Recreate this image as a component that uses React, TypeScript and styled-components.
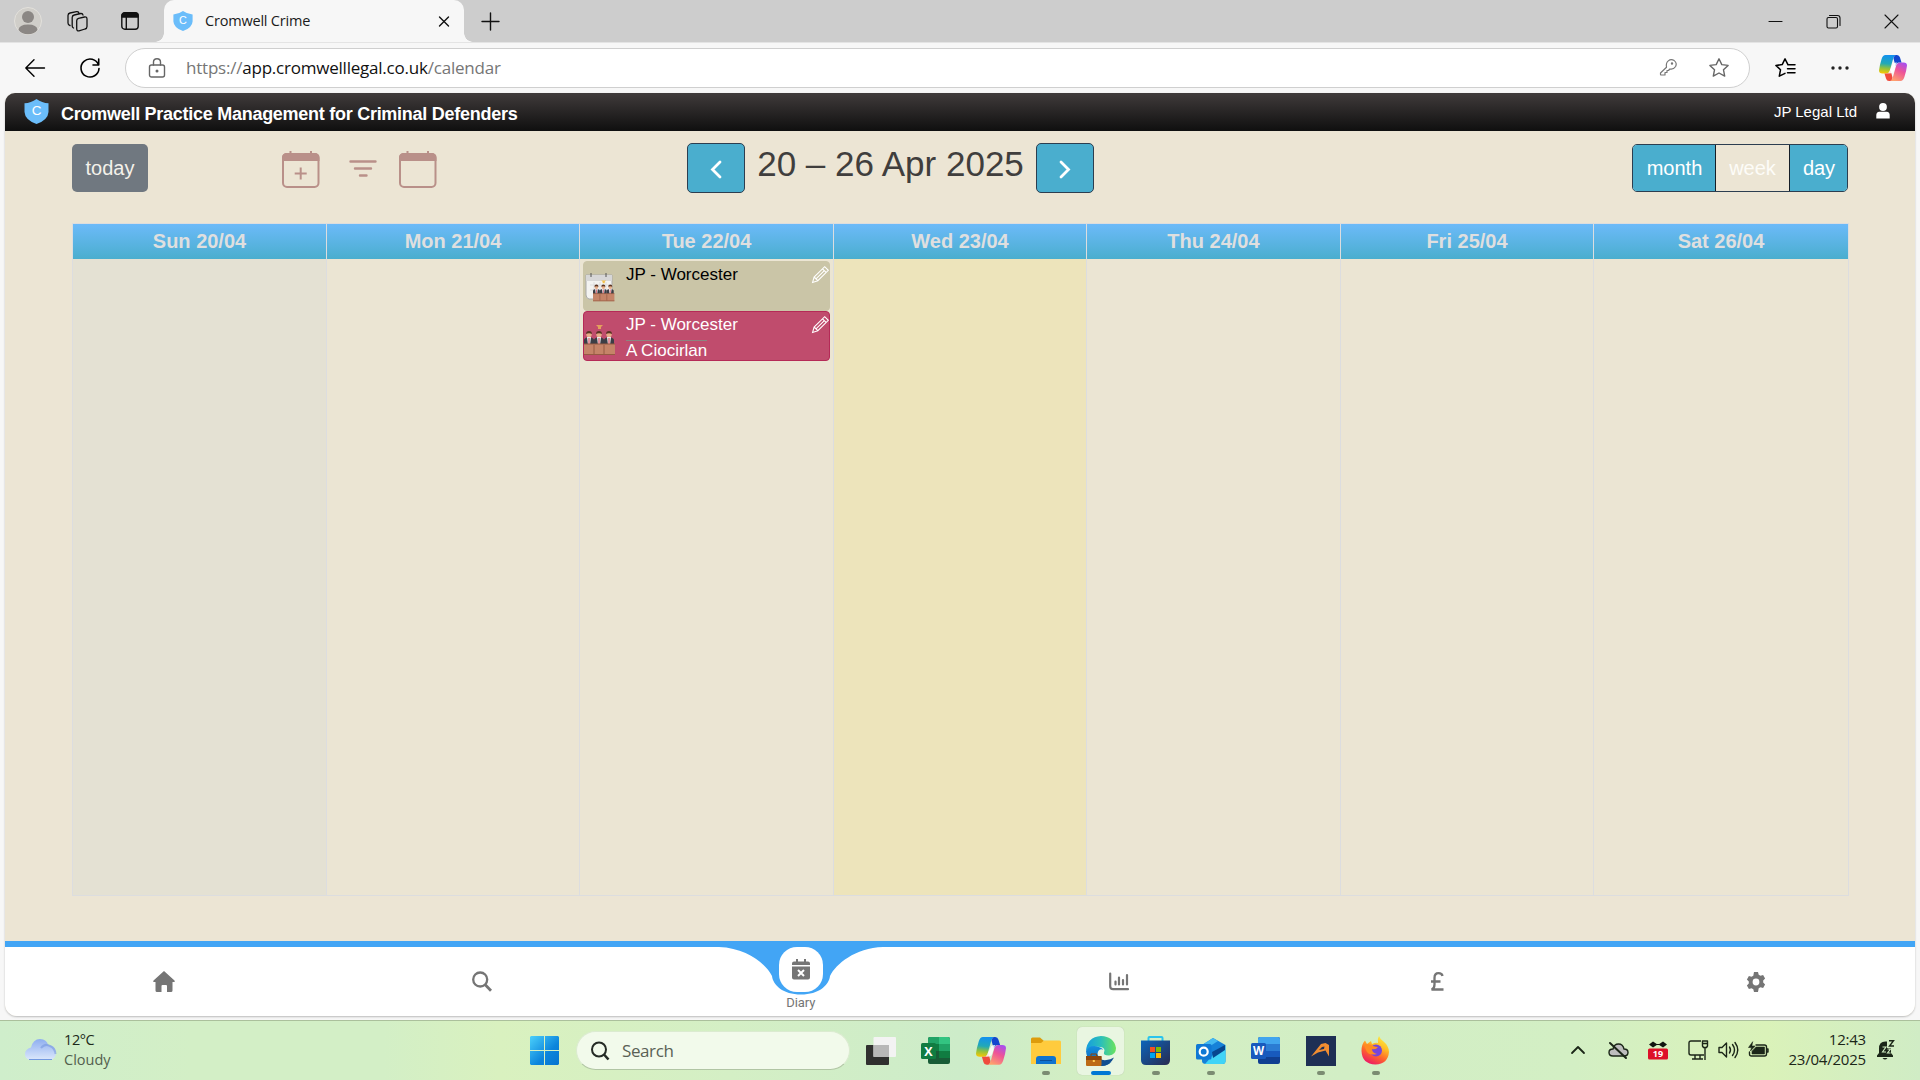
import React from 'react';
import styled, { createGlobalStyle } from 'styled-components';

const Global = createGlobalStyle`
  * { box-sizing: border-box; }
  html, body { margin: 0; padding: 0; }
  body { width: 1920px; height: 1080px; overflow: hidden; background: #f7f7f7; font-family: "Liberation Sans", Arial, sans-serif; }
  svg { display: block; flex: none; overflow: visible; }
`;
const SEGOE = '"Open Sans", "Noto Sans", sans-serif';

const Screen = styled.div`
  width: 1920px; height: 1080px; display: flex; flex-direction: column; background: #f7f7f7;
`;
const TabStrip = styled.div`
  height: 42px; background: #cdcdcd; display: flex; align-items: center; color: #111;
`;
const Slot = styled.div<{ $w: number; $gap?: number; $after?: number; $drop?: number }>`
  width: ${p => p.$w}px; margin: ${p => p.$drop ?? 0}px ${p => p.$after ?? 0}px 0 ${p => p.$gap ?? 0}px;
  flex: none; display: flex; justify-content: center; align-items: center;
`;
const Tab = styled.div`
  position: relative; width: 300px; height: 42px; margin-left: 8px; flex: none; background: #f7f7f7; border-radius: 10px 10px 0 0;
  display: flex; align-items: center; padding: 0 13px 0 9px;
  &::before, &::after { content: ''; position: absolute; bottom: 0; width: 9px; height: 9px; }
  &::before { left: -9px; background: radial-gradient(circle at 0 0, transparent 8.5px, #f7f7f7 9px); }
  &::after { right: -9px; background: radial-gradient(circle at 100% 0, transparent 8.5px, #f7f7f7 9px); }
`;
const TabTitle = styled.span`
  flex: 1; margin-left: 12px; font: 14.5px/20px ${SEGOE}; letter-spacing: -0.2px; color: #1b1b1b; white-space: nowrap;
`;
const Spacer = styled.div`flex: 1;`;
const Toolbar = styled.div`
  height: 51px; display: flex; align-items: center; padding-bottom: 1px; border-top: 1px solid #e4e4e4;
`;
const AddressBar = styled.div`
  width: 1625px; height: 40px; margin-left: 11px; border: 1px solid #cfcfcf; border-radius: 20px; background: #fff; display: flex; align-items: center; padding-left: 22px;
`;
const Url = styled.span`
  margin-left: 20px; font: 17px/24px ${SEGOE}; letter-spacing: -0.22px; color: #767676; flex: 1; white-space: nowrap;
  b { font-weight: 400; color: #111; }
`;
const Page = styled.div`
  width: 1910px; height: 923px; margin-left: 5px; border-radius: 10px 10px 12px 12px; overflow: hidden; display: flex; flex-direction: column;
  background: #ece5d4; box-shadow: 0 1px 2px #bbb; flex: none;
`;
const AppBar = styled.header`
  height: 38px; flex: none; background: linear-gradient(#403b3b, #0f0f0f); color: #fff; display: flex; align-items: center; padding: 0 25px 2px 19px;
`;
const AppTitle = styled.h1`
  margin: 5px 0 0 12px; font-size: 18px; line-height: 22px; font-weight: 700; letter-spacing: -0.27px; flex: 1; white-space: nowrap;
`;
const Account = styled.span`font-size: 15px; margin-right: 19px; white-space: nowrap;`;
const Main = styled.main`
  height: 810px; flex: none; padding: 12px 66px 0 67px; display: flex; flex-direction: column;
`;
const Controls = styled.div`
  height: 80px; width: 1776px; display: grid; grid-template-columns: 615px 407px 1fr; align-items: start;
`;
const LeftTools = styled.div`display: flex; align-items: flex-start;`;
const TodayButton = styled.button`
  width: 76px; height: 48px; margin: 1px 134px 0 0; border: 0; border-radius: 5px; background: #707880; color: #f4f1ea; font: 20px "Liberation Sans", Arial, sans-serif; padding: 0;
`;
const NavGroup = styled.div`display: flex; justify-content: space-between;`;
const ArrowButton = styled.button`
  width: 58px; height: 50px; padding: 0; border: 1px solid #2c3e50; border-radius: 5px; background: #4aaece; display: flex; align-items: center; justify-content: center;
`;
const Period = styled.h2`
  margin: 0; font-size: 35px; font-weight: 400; line-height: 42px; color: #403e3d; white-space: nowrap;
`;
const Views = styled.div`
  justify-self: end; display: flex; height: 48px; margin-top: 1px; width: 216px; border: 1px solid #2c3e50; border-radius: 5px; overflow: hidden;
`;
const ViewButton = styled.button<{ $w: number; $active?: boolean }>`
  width: ${p => p.$w}px; flex: none; border: 0; padding: 0 0 0 1px; color: #fff; font: 20px "Liberation Sans", Arial, sans-serif;
  background: ${p => (p.$active ? '#ece5d4' : '#4aaece')};
  ${p => p.$active && 'border: solid #151e27; border-width: 0 1px; color: #fdfcf8; padding: 0;'}
`;
const Calendar = styled.div`
  width: 1777px; height: 673px; border: 1px solid #dcdddf; display: grid; grid-template-columns: 253px 253px 254px 253px 254px 253px 1fr;
  background: #ebe5d3;
`;
const Day = styled.section<{ $tone?: string }>`
  display: flex; flex-direction: column; min-width: 0; background: ${p => p.$tone ?? 'transparent'};
  & + & { border-left: 1px solid #dcdddf; }
`;
const DayHead = styled.div`
  height: 35px; background: linear-gradient(#6cbaf9, #4aaece); color: #dfdfdf; font-size: 20px; line-height: 34px; font-weight: 700; text-align: center; margin-bottom: 2px;
`;
const EventCard = styled.article<{ $bg: string; $line: string; $color: string }>`
  margin: 0 3px; height: 50px; border: 1px solid ${p => p.$line}; border-radius: 4px; background: ${p => p.$bg}; color: ${p => p.$color};
  display: flex; align-items: flex-start; font-size: 17px;
`;
const EventText = styled.div`
  flex: 1; padding: 2px 0 0 11px; line-height: 22px; white-space: nowrap; display: flex; flex-direction: column; align-items: flex-start;
`;
const Client = styled.span`border-top: 1px solid #8b8580; margin-top: 4px; line-height: 19px;`;
const EditIcon = styled.svg`margin-top: 4px;`;
const BottomNav = styled.nav`
  position: relative; height: 75px; flex: none; background: #fff; border-top: 6px solid #42a5f5; display: grid; grid-template-columns: repeat(6, 1fr); color: #757575;
`;
const NavItem = styled.div<{ $top?: boolean }>`
  position: relative; display: flex; align-items: ${p => (p.$top ? 'flex-start' : 'center')}; justify-content: center;
`;
const Swoosh = styled.div`position: absolute; left: 0; right: 0; top: 0; display: flex; justify-content: center;`;
const ActiveItem = styled.div`
  position: relative; display: flex; flex-direction: column; align-items: center; width: 44px;
`;
const ActiveBox = styled.div`
  width: 44px; height: 45px; background: #fff; border-radius: 18px; display: flex; align-items: center; justify-content: center;
`;
const ActiveLabel = styled.span`font: 13px/16px Roboto, sans-serif; color: #757575; margin-top: 3px; letter-spacing: -0.1px;`;
const Taskbar = styled.footer`
  height: 60px; margin-top: 4px; flex: none; border-top: 1px solid #abc09c; display: flex; align-items: center;
  background: linear-gradient(90deg, #cfeecb 0%, #d3efc6 10%, #d3efc6 20%, #d9f1bf 26%, #d4efc5 38%, #cdecc9 50%, #d4efc2 58%, #d2eec5 70%, #d3efc4 82%, #daf2b9 92%, #d0ecc5 100%);
  font-family: ${SEGOE};
`;
const Weather = styled.div`
  width: 505px; display: flex; align-items: center; padding: 0 0 2px 25px; gap: 8px; font-size: 14.5px; line-height: 20px; letter-spacing: -0.4px; color: #1d2a1a;
  span { display: block; color: #53604e; letter-spacing: 0; }
`;
const SearchBox = styled.div`
  width: 274px; height: 39px; margin: 0 3px 0 17px; border-radius: 20px; background: #f2faeb; border: 1px solid #dbebd0; border-bottom-color: #b1c5a4;
  display: flex; align-items: center; gap: 12px; padding-left: 13px; font-size: 17px; letter-spacing: -0.4px; color: #5a6155;
`;
const AppSlot = styled.div<{ $active?: boolean; $mark?: 'idle' | 'on' }>`
  position: relative; width: 47px; height: 48px; margin: 0 4px; flex: none; border-radius: 5px; display: flex; align-items: center; justify-content: center;
  background: ${p => (p.$active ? '#e9f6e1' : 'transparent')};
  ${p => p.$active && 'box-shadow: 0 0 1px #aabba0;'}
  &::after {
    content: ''; position: absolute; bottom: 0; left: 50%; transform: translateX(-50%); height: 4px; border-radius: 2px;
    width: ${p => (p.$mark === 'on' ? 20 : p.$mark === 'idle' ? 8 : 0)}px; background: ${p => (p.$mark === 'on' ? '#0078d4' : '#7b8c72')};
  }
`;
const Tray = styled.div`flex: 1; display: flex; align-items: center; justify-content: flex-end; padding: 0 26px 1px 0; color: #1b2618;`;
const Clock = styled.div`
  width: 88px; text-align: right; font-size: 15px; line-height: 20px; letter-spacing: -0.2px; margin: 0 11px 2px 9px; white-space: nowrap; color: #1b2618;
`;

const Shield = ({ w, h }: { w: number; h: number }) => (
  <svg width={w} height={h} viewBox="0 0 25 25" preserveAspectRatio="none">
    <path d="M12.5 0Q18 4 24.5 4.3V13Q24 21 12.5 25Q1 21 .5 13V4.3Q7 4 12.5 0Z" fill="#6bbdfa" />
    <text x="12.5" y="16" textAnchor="middle" fontSize="13.5" fill="#fff" fontFamily="Liberation Sans">C</text>
  </svg>
);
const line = { fill: 'none', stroke: 'currentColor', strokeWidth: 1.4, strokeLinecap: 'round', strokeLinejoin: 'round' } as const;

const Copilot = ({ s = 28 }: { s?: number }) => (
  <svg width={s} height={s * 26 / 28} viewBox="0 0 28 26">
    <defs>
      <linearGradient id="cpA" x1="0.3" y1="0" x2="0.2" y2="1"><stop offset="0" stopColor="#1391ee" /><stop offset=".45" stopColor="#22a9b6" /><stop offset=".7" stopColor="#8fc13f" /><stop offset="1" stopColor="#fdc800" /></linearGradient>
      <linearGradient id="cpB" x1="0.8" y1="0" x2="0.3" y2="1"><stop offset="0" stopColor="#a64ff0" /><stop offset=".45" stopColor="#ee5497" /><stop offset="1" stopColor="#ffa16d" /></linearGradient>
    </defs>
    <path d="M6.500 0H17q-2 .5-2.800 3.500L11 15q-1 3.500-4 3.500H3.500Q0 18.500 0 15.500Q.4 11 2.600 4 3.800 0 6.500 0Z" fill="url(#cpA)" />
    <path d="M21.500 26H11q2-.5 2.800-3.500L17 11q1-3.500 4-3.500h3.500Q28 7.500 28 10.500q-.4 4.500-2.600 11.500Q24.200 26 21.500 26Z" fill="url(#cpB)" />
    <path d="M14.500 3.500Q15.300 0 17 0h1q2.300 0 3 2.500L22.500 7.500H20q-2.500 0-3.500 3.500Z" fill="#1246cf" />
    <path d="M13.500 22.500Q12.700 26 11 26h-1q-2.300 0-3-2.500L5.500 18.500H8q2.500 0 3.500-3.500Z" fill="#f04b3d" />
    <path d="M14.300 8.500Q15.300 7.500 18 7.500 17 9 16 13l-1.500 4Q13 18.500 9 18.500 10.500 17.500 11.500 14Z" fill="#fff" opacity=".85" />
  </svg>
);
const CalIcon = ({ plus }: { plus?: boolean }) => (
  <svg width="38" height="38" viewBox="0 0 38 38" fill="none" stroke="#b99089" strokeWidth="2">
    <rect x="1" y="3" width="35.500" height="33" rx="4" />
    <path d="M1 9V6.500Q1 3 5 3H32.500Q36.500 3 36.500 6.500V9Z" fill="#b99089" />
    <path d="M8.500 0v4M29 0v4" />
    {plus && <path d="M18.700 16.500v12M12.700 22.500h12" />}
  </svg>
);
const Jury = ({ board }: { board?: boolean }) => (
  <svg width="31" height="48" viewBox="0 0 31 48">
    {board && <g><path d="M2 13h26v24H5q-3-1-3-4Z" fill="#f3f3f1" stroke="#aaa" /><path d="M2 13h26v6H2Z" fill="#d7d7d7" /><path d="M6 23h19M6 28h19M10 20v14M16 20v14M22 20v14" stroke="#ddd" fill="none" /><path d="M7 11v4M22 11v4" stroke="#555" /></g>}
    <g transform={board ? 'translate(9 9.500) scale(.69)' : ''}>
      <path d="M12 13h7l-2 2v2h-3v-2Z" fill={board ? '#f3c14a' : '#e3a05c'} />
      {[5, 15, 25].map(x => (
        <g key={x}>
          <path d={`M${x - 5} 33V28q0-2 5-3 5 1 5 3v5Z`} fill="#3c3d45" />
          <path d={`M${x - 2} 25h4l-1 8h-2Z`} fill="#f4f4f4" /><path d={`M${x} 26v7`} stroke="#cf3346" />
          <circle cx={x} cy="22.500" r="2.700" fill="#e7ae88" /><path d={`M${x - 3} 22q0-3 3-3t3 3q-3-1.500-6 0`} fill="#5a3523" />
        </g>
      ))}
      <path d="M0 32h31v11H0Z" fill="#c58468" /><path d="M0 32h31M0 42.500h31M10 33v9M20 33v9" stroke="#965a43" fill="none" />
    </g>
  </svg>
);
const Pencil = () => (
  <EditIcon width="17" height="17" viewBox="0 0 17 17" fill="none" stroke="#fff" strokeWidth="1.100">
    <path d="M.6 16.400L2.100 11 12.700.700 16.300 4.300 5.800 14.700Z M2.100 11l3.700 3.700M10.500 2.800l3.600 3.600M4 12.800l8.300-8.200" />
  </EditIcon>
);
const Chevron = ({ right }: { right?: boolean }) => (
  <svg width="12" height="19" viewBox="0 0 12 19" fill="none" stroke="#fff" strokeWidth="2.800" strokeLinecap="round">
    <path d={right ? 'M2 3L9.500 10.500 2 18' : 'M10 3L2.500 10.500 10 18'} />
  </svg>
);
const Excel = () => (
  <svg width="30" height="29" viewBox="0 0 30 29">
    <rect x="7" y="1" width="22" height="27" rx="2" fill="#185c37" /><path d="M7 3q0-2 2-2h9v9H7Z" fill="#21a366" /><path d="M18 1h9q2 0 2 2v6H18Z" fill="#33c481" /><path d="M7 8h11v7H7ZM18 15h11v7H18Z" fill="#107c41" /><path d="M18 8h11v7H18Z" fill="#21a366" />
    <rect y="7" width="15" height="16" rx="1.500" fill="#107c41" /><text x="7.500" y="19.500" fontSize="12.500" fontWeight="700" textAnchor="middle" fill="#fff" fontFamily="Open Sans">X</text>
  </svg>
);
const Word = () => (
  <svg width="30" height="29" viewBox="0 0 30 29">
    <rect x="7" y="1" width="22" height="27" rx="2" fill="#103f91" /><path d="M7 3q0-2 2-2h18q2 0 2 2v5H7Z" fill="#41a5ee" /><path d="M7 8h22v7H7Z" fill="#2b7cd3" /><path d="M7 15h22v6H7Z" fill="#185abd" />
    <rect y="7" width="15" height="16" rx="1.500" fill="#185abd" /><text x="7.500" y="19" fontSize="11.500" fontWeight="700" textAnchor="middle" fill="#fff" fontFamily="Open Sans">W</text>
  </svg>
);
const Folder = () => (
  <svg width="30" height="28" viewBox="0 0 30 28">
    <path d="M0 2q0-1.500 1.500-1.500H9L13 4v5H0Z" fill="#dd9c0c" /><path d="M0 6h10l3-2.500h15.500q1.500 0 1.500 1.500v22H0Z" fill="#ffcb3d" /><path d="M5 27v-5q0-3 3-3h14q3 0 3 3v5Z" fill="#0f74cf" /><path d="M9 23.500h12" stroke="#0b4f9b" />
  </svg>
);
const Edge = () => (
  <svg width="30" height="30" viewBox="0 0 30 30">
    <defs>
      <linearGradient id="edA"><stop offset="0" stopColor="#169dde" /><stop offset=".5" stopColor="#2bbfba" /><stop offset="1" stopColor="#6be35c" /></linearGradient>
      <linearGradient id="edB" x2="0" y2="1"><stop stopColor="#1590df" /><stop offset="1" stopColor="#0b5cab" /></linearGradient>
    </defs>
    <path d="M0 15Q1 1 15 0q13 .5 15 12 0 7-7 7.500-6 0-5-3 2-5-4-5.500Q5 9 0 15Z" fill="url(#edA)" />
    <path d="M0 15Q4 8 13 11q3 1 4.500 2.500Q12 12 11.500 18q.5 7 9 8.500 3 .3 5-.5-5 4.500-12 3.800Q1 27 0 15Z" fill="url(#edB)" />
    <path d="M11.500 18q1.500 7 9 6 4-.5 7.500-2.500-4 8.500-13 8.500-4-5-3.500-12Z" fill="#124e91" />
    <rect y="20" width="15.500" height="10" rx="1" fill="#bd6b16" /><path d="M0 20h15.500v4H0Z" fill="#8c450b" /><path d="M5 20v-2h5.500v2" fill="none" stroke="#8c450b" /><rect x="6.800" y="24" width="2" height="2" fill="#ffcb52" />
  </svg>
);
const Store = () => (
  <svg width="29" height="29" viewBox="0 0 29 29">
    <defs><linearGradient id="st" x2="1" y2="1"><stop stopColor="#0c65bb" /><stop offset="1" stopColor="#292b50" /></linearGradient></defs>
    <path d="M7.500 6V2q0-1 1-1h12q1 0 1 1v4" fill="none" stroke="#29c4ed" strokeWidth="2" /><path d="M0 4.500h29V24q0 5-5 5H5q-5 0-5-5Z" fill="url(#st)" />
    <path d="M9 11h5v5H9Z" fill="#f25022" /><path d="M15 11h5v5h-5Z" fill="#7fba00" /><path d="M9 17h5v5H9Z" fill="#00a4ef" /><path d="M15 17h5v5h-5Z" fill="#ffb900" />
  </svg>
);
const Outlook = () => (
  <svg width="30" height="28" viewBox="0 0 30 28">
    <path d="M6 8L17 1l12.500 7v16q0 3-3 3H10q-4 0-4-3Z" fill="#1681d8" /><path d="M6 8L17 1l5 3L8 13Z" fill="#43b8f1" /><path d="M17 18L29.500 9v15q0 3-3 3H9Z" fill="#40d4f7" /><path d="M16 15L29 8v5l-12 8Z" fill="#07468f" />
    <rect y="7" width="15.500" height="15.500" rx="1.500" fill="#0f78d4" /><circle cx="7.700" cy="14.700" r="4" fill="none" stroke="#fff" strokeWidth="2.200" />
  </svg>
);
const Firefox = () => (
  <svg width="29" height="29" viewBox="0 0 29 29">
    <defs><linearGradient id="ff" x1=".8" y1="0" x2=".3" y2="1"><stop stopColor="#fff044" /><stop offset=".35" stopColor="#ffbc25" /><stop offset=".65" stopColor="#ff652b" /><stop offset="1" stopColor="#ec1769" /></linearGradient></defs>
    <path d="M18 0q1 3 4 5 6 5 6 11-1 12-13.500 12.500Q1 28 .5 15 .5 8 4 4.500L6 8l4-3 1 3q4-2 6-1Q16 3 18 0Z" fill="url(#ff)" />
    <circle cx="15" cy="14.500" r="6" fill="#7645da" /><path d="M3 9q5-2 9 1 3 1 5 1-2 3-6 2 0 4 5 5-9 2-11-4Z" fill="#ff8b22" />
  </svg>
);

const days = ['Sun 20/04', 'Mon 21/04', 'Tue 22/04', 'Wed 23/04', 'Thu 24/04', 'Fri 25/04', 'Sat 26/04'];
const tones: Record<number, string> = { 0: '#e4e1d3', 3: '#ede4bb' };

export default function App() {
  return (
    <Screen>
      <Global />
      <TabStrip>
        <Slot $w={56}>
          <svg width="28" height="28" viewBox="0 0 28 28"><circle cx="14" cy="14" r="13.500" fill="#d0cec9" stroke="#e3e1dc" /><circle cx="14" cy="10" r="6" fill="#8b8784" /><path d="M4.500 23Q5 17.500 14 17.500t9.500 5.500Q20 27.300 14 27.300T4.500 23Z" fill="#8b8784" /></svg>
        </Slot>
        <Slot $w={43}>
          <svg width="21" height="21" viewBox="0 0 21 21" {...line} strokeWidth={1.3}><path d="M11.500 7.300l6-1.300q2.500-.3 2.500 2v7.500q0 2-2 2.500l-6 1.800q-2.300.4-2.300-2V9.800q0-2 1.800-2.500Z" /><path d="M6.500 17q-1.300-.5-1.300-2V6.500q0-2 2-2.500l6.500-1.500q2-.2 2.300 1.500M3 14.500Q1 14 1 12V4.500q0-2 2-2.500L9.500.6q1.700-.2 2.300 1" /></svg>
        </Slot>
        <Slot $w={32} $gap={15}>
          <svg width="18" height="18" viewBox="0 0 18 18" {...line}><rect x=".8" y=".8" width="16.400" height="16.400" rx="3" /><path d="M1 5V3.500Q1 1 4 1h10q3 0 3 2.500V5Z" fill="currentColor" /><path d="M5.300 5v12" /></svg>
        </Slot>
        <Slot $w={10} />
        <Tab>
          <Shield w={20} h={20} />
          <TabTitle>Cromwell Crime</TabTitle>
          <svg width="14" height="14" viewBox="0 0 14 14" {...line}><path d="M2.500 3l9 9M11.500 3l-9 9" /></svg>
        </Tab>
        <Slot $w={53}>
          <svg width="17" height="17" viewBox="0 0 17 17" {...line}><path d="M8.500 0v17M0 8.500h17" /></svg>
        </Slot>
        <Spacer />
        <Slot $w={58}><svg width="13" height="13" viewBox="0 0 13 13" {...line} strokeWidth={1.1}><path d="M0 6.500h13" /></svg></Slot>
        <Slot $w={58}><svg width="13" height="13" viewBox="0 0 13 13" {...line} strokeWidth={1.1}><rect x="0" y="2.500" width="10.500" height="10.500" rx="1.500" /><path d="M2.500.5h8q2.500 0 2.500 2.500v7.500" /></svg></Slot>
        <Slot $w={58}><svg width="13" height="13" viewBox="0 0 13 13" {...line} strokeWidth={1.1}><path d="M0 0l13 13M13 0L0 13" /></svg></Slot>
      </TabStrip>
      <Toolbar>
        <Slot $w={20} $gap={25}><svg width="20" height="18" viewBox="0 0 20 18" {...line}><path d="M19.500 9H.8M9 .8L.8 9 9 17.200" /></svg></Slot>
        <Slot $w={20} $gap={35} $after={14}><svg width="20" height="20" viewBox="0 0 20 20" {...line} strokeWidth={1.6}><path d="M18.500 7A9 9 0 1 0 19 10.500M18.700 1v6H13" /></svg></Slot>
        <AddressBar>
          <svg width="18" height="20" viewBox="0 0 18 20" {...line} stroke="#666"><rect x="1.500" y="7" width="15" height="12" rx="2" /><path d="M5.500 7V4Q5.500.8 9 .8T12.500 4v3" /><circle cx="9" cy="13" r=".8" fill="#666" /></svg>
          <Url>https://<b>app.cromwelllegal.co.uk</b>/calendar</Url>
          <svg width="17" height="17" viewBox="0 0 17 17" {...line} stroke="#777" strokeWidth={1.2}><path d="M6.500 8.200Q5.700 4 8.300 1.900 11-.3 14.200 1.600 17.300 4 15.600 7.500 13.500 10.800 9.800 10L8.500 11.500H7v2H5V16H1.200q-.7 0-.7-.7V14Z" /><circle cx="12" cy="4.500" r=".6" /></svg>
          <Slot $w={20} $gap={32} $after={20}><svg width="20" height="19" viewBox="0 0 20 19" {...line} stroke="#666"><path d="M10 .8l2.800 5.800 6.300.8-4.600 4.400 1.200 6.300L10 15l-5.700 3.100 1.200-6.300L.9 7.400l6.300-.8Z" /></svg></Slot>
        </AddressBar>
        <Slot $w={20} $gap={25}><svg width="21" height="20" viewBox="0 0 21 20" {...line} strokeWidth={1.5}><path d="M12.800 6.300L10 .8 7.200 6.600.9 7.400l4.600 4.400-1.200 6.400L10 15.300M12.500 10.800H20M12.500 14.800H20M12.800 6.800H20" /></svg></Slot>
        <Slot $w={18} $gap={36}><svg width="18" height="4" viewBox="0 0 18 4" fill="#222"><circle cx="2" cy="2" r="1.700" /><circle cx="9" cy="2" r="1.700" /><circle cx="16" cy="2" r="1.700" /></svg></Slot>
        <Slot $w={28} $gap={30}><Copilot /></Slot>
      </Toolbar>
      <Page>
        <AppBar>
          <Shield w={25} h={25} />
          <AppTitle>Cromwell Practice Management for Criminal Defenders</AppTitle>
          <Account>JP Legal Ltd</Account>
          <svg width="14" height="16" viewBox="0 0 14 16" fill="#fff"><circle cx="7" cy="4" r="3.900" /><path d="M.3 15.500V12q0-2.800 3-3.200h7.400q3 .4 3 3.200v3.500Z" /></svg>
        </AppBar>
        <Main>
          <Controls>
            <LeftTools>
              <TodayButton>today</TodayButton>
              <Slot $w={38} $drop={8}><CalIcon plus /></Slot>
              <Slot $w={28} $gap={29} $drop={17}><svg width="28" height="17" viewBox="0 0 28 17" stroke="#b99089" strokeWidth="2.400" strokeLinecap="round"><path d="M1.500 1.500h25M6 8.500h16M11 15.500h6.500" /></svg></Slot>
              <Slot $w={38} $gap={22} $drop={8}><CalIcon /></Slot>
            </LeftTools>
            <NavGroup>
              <ArrowButton><Chevron /></ArrowButton>
              <Period>20 – 26 Apr 2025</Period>
              <ArrowButton><Chevron right /></ArrowButton>
            </NavGroup>
            <Views>
              <ViewButton $w={82}>month</ViewButton>
              <ViewButton $w={75} $active>week</ViewButton>
              <ViewButton $w={57}>day</ViewButton>
            </Views>
          </Controls>
          <Calendar>
            {days.map((d, i) => (
              <Day key={d} $tone={tones[i]}>
                <DayHead>{d}</DayHead>
                {i === 2 && (
                  <>
                    <EventCard $bg="#cac5a7" $line="#cac5a7" $color="#000">
                      <Jury board />
                      <EventText>JP - Worcester</EventText>
                      <Pencil />
                    </EventCard>
                    <EventCard $bg="#c04c6d" $line="#b52a57" $color="#fff">
                      <Jury />
                      <EventText>JP - Worcester<Client>A Ciocirlan</Client></EventText>
                      <Pencil />
                    </EventCard>
                  </>
                )}
              </Day>
            ))}
          </Calendar>
        </Main>
        <BottomNav>
          <NavItem><svg width="22" height="21" viewBox="0 0 22 21" fill="currentColor"><path d="M11 0l10.500 9.500q1 1.500-.5 1.500h-1.500v8.500q0 1.500-1.500 1.500h-4v-6q0-1-1-1H9.500q-1 0-1 1v6H4q-1.500 0-1.500-1.500V11H1Q-.5 11 .5 9.500Z" /></svg></NavItem>
          <NavItem><svg width="20" height="21" viewBox="0 0 20 21" fill="none" stroke="currentColor"><circle cx="8.200" cy="8.500" r="7" strokeWidth="2.300" /><path d="M13 13.500l6 6.300" strokeWidth="2.800" /></svg></NavItem>
          <NavItem $top>
            <Swoosh><svg width="164" height="48" viewBox="0 0 164 48"><path d="M0 0C28 1 47 17 53 29 54 38 64 47.500 82 47.500S110 38 111 29C117 17 136 1 164 0Z" fill="#42a5f5" /></svg></Swoosh>
            <ActiveItem>
              <ActiveBox><svg width="18" height="21" viewBox="0 0 18 21" fill="currentColor"><path d="M4 0h2v2.500h6V0h2v2.500h2q2 0 2 2V6H0V4.500q0-2 2-2h2ZM0 7.500h18v11q0 2-2 2H2q-2 0-2-2Z" /><path d="M6 11l6 6M12 11l-6 6" stroke="#fff" strokeWidth="2" /></svg></ActiveBox>
              <ActiveLabel>Diary</ActiveLabel>
            </ActiveItem>
          </NavItem>
          <NavItem><svg width="20" height="19" viewBox="0 0 20 19" fill="none" stroke="currentColor" strokeLinecap="round"><path d="M1.200 1.500v12.700q0 3 3 3H19M6.500 12.500V9.500M10 12.500V5.500M14 12.500V8M18 12.500V3" strokeWidth="2.200" /></svg></NavItem>
          <NavItem><svg width="14" height="19" viewBox="0 0 14 19" fill="none" stroke="currentColor" strokeWidth="2.300"><path d="M12.500 4Q12 1.200 8.500 1.200 4.500 1.200 4.500 6v6.500q0 4-3 5H13.500M1 9.500h9.500" /></svg></NavItem>
          <NavItem><svg width="20" height="20" viewBox="0 0 20 20"><path fill="currentColor" fillRule="evenodd" d="M8 0h4l.7 2.700 1.800 1 2.600-.8 2 3.500-1.900 2v2.200l1.900 2-2 3.500-2.600-.8-1.800 1L12 20H8l-.7-2.700-1.800-1-2.600.8-2-3.500 1.900-2V9.400l-1.900-2 2-3.500 2.600.8 1.800-1Zm2 6.600a3.400 3.400 0 1 0 0 6.800 3.400 3.400 0 0 0 0-6.800Z" /></svg></NavItem>
        </BottomNav>
      </Page>
      <Taskbar>
        <Weather>
          <svg width="31" height="22" viewBox="0 0 31 22"><defs><linearGradient id="cl" y2="1" x2="0"><stop stopColor="#8eaef0" /><stop offset="1" stopColor="#dce8fb" /></linearGradient></defs><path d="M7 21Q0 21 0 15q0-5 6-6.500Q8 0 15 0q7 .5 8 6 7 0 8 7 0 8-7 8Z" fill="url(#cl)" /><path d="M16 9q4-5 9-2 5 2 5.500 8" fill="none" stroke="#6d90db" strokeWidth="2" opacity=".5" /><path d="M4 20.500h23" stroke="#7299e0" /></svg>
          <div>12°C<span>Cloudy</span></div>
        </Weather>
        <Slot $w={29} $gap={25}>
          <svg width="29" height="29" viewBox="0 0 29 29"><defs><linearGradient id="wn" x2="1" y2="1"><stop stopColor="#4bd0fb" /><stop offset=".6" stopColor="#0c85dc" /><stop offset="1" stopColor="#0674cf" /></linearGradient></defs><path fill="url(#wn)" d="M1 0h13v14H0V1ZM15 0h13l1 1v13H15ZM0 15h14v14H1l-1-1ZM15 15h14v13l-1 1H15Z" /></svg>
        </Slot>
        <SearchBox>
          <svg width="20" height="20" viewBox="0 0 20 20" fill="none" stroke="#252b25" strokeWidth="2"><circle cx="9" cy="8.500" r="7" /><path d="M14 13.500l4.500 5" strokeWidth="2.600" /></svg>
          Search
        </SearchBox>
        <AppSlot><svg width="30" height="28" viewBox="0 0 30 28"><rect y="8" width="23" height="20" rx="1" fill="#30302f" /><rect x="7.500" y="0" width="22.500" height="20" rx="1" fill="#f3f3f3" /><path d="M7.500 8H23v12H7.500Z" fill="#b8b8b8" /></svg></AppSlot>
        <AppSlot><Excel /></AppSlot>
        <AppSlot><Copilot s={30} /></AppSlot>
        <AppSlot $mark="idle"><Folder /></AppSlot>
        <AppSlot $active $mark="on"><Edge /></AppSlot>
        <AppSlot $mark="idle"><Store /></AppSlot>
        <AppSlot $mark="idle"><Outlook /></AppSlot>
        <AppSlot><Word /></AppSlot>
        <AppSlot $mark="idle"><svg width="30" height="30" viewBox="0 0 30 30"><rect width="30" height="30" fill="#1e2f55" /><path d="M5 20.500L15 8l4.500-1 3.500 2v11.500L19.500 14.500 12 16.500ZM13 14l5-1 .5-2.500-2.500.5Z" fill="#f28d31" fillRule="evenodd" /></svg></AppSlot>
        <AppSlot $mark="idle"><Firefox /></AppSlot>
        <Tray>
          <svg width="14" height="8" viewBox="0 0 14 8" {...line} strokeWidth={1.8}><path d="M1 7l6-6 6 6" /></svg>
          <Slot $w={21} $gap={23}><svg width="21" height="17" viewBox="0 0 21 17" {...line}><path d="M5 14Q1 14 1 10.500T5 7q1-5 5.500-5T16 7q4 0 4 3.500T16 14Z" fill="#bdbdbd" /><path d="M2 1l16 15" strokeWidth="2" /></svg></Slot>
          <Slot $w={20} $gap={19}><svg width="20" height="19" viewBox="0 0 20 19"><path d="M1 3.500L5 .5l4.500 3L5 6.500ZM10.500 3.500L15 .5l4 3-4 3ZM9 3h2v1H9Z" fill="#101510" /><rect y="7.500" width="20" height="11" rx="1.500" fill="#dd1029" /><text x="10" y="16" fontSize="9" fontWeight="700" textAnchor="middle" fill="#fff" fontFamily="Open Sans">19</text></svg></Slot>
          <Slot $w={20} $gap={20}><svg width="20" height="20" viewBox="0 0 20 20" {...line} strokeLinecap="butt"><path d="M13 1H3Q1 1 1 3v10q0 2 2 2h13M4 19h11M7 15v4M12 15v4M14.500 1h5v5l-1 1.500h-3l-1-1.500ZM17 8v12M14.500 3.500h5" /></svg></Slot>
          <Slot $w={21} $gap={10}><svg width="21" height="18" viewBox="0 0 21 18" {...line}><path d="M1 6.500h3L8.500 2v14L4 11.500H1ZM11.500 6q2 3 0 6M14.500 3.500q4 5.500 0 11M17 1.500q5.500 7.500 0 15" /></svg></Slot>
          <Slot $w={21} $gap={9}><svg width="21" height="16" viewBox="0 0 21 16" {...line}><path d="M8 3h8.500q2 0 2 2v7q0 2-2 2h-13q-2 0-2-2v-2M19 7h1v3h-1" /><path d="M8 5H16.500v7H4V9.500ZM4.500 0L.5 5.500h3L2.500 9l4.500-5H4Z" fill="currentColor" strokeWidth=".6" /></svg></Slot>
          <Clock>12:43<br />23/04/2025</Clock>
          <svg width="17" height="20" viewBox="0 0 17 20"><path d="M10 1.500Q2 .5 2 8.500V13L0 15.500V17h16v-1.500L14 13V8H10Z" fill="#1b2618" /><path d="M5.500 18h5q-2.500 3-5 0Z" fill="#1b2618" /><path d="M5.500 7h3.500l-3.500 5h3.500M10.500 9h3l-3 4h3" fill="none" stroke="#d3efc4" strokeWidth="1.100" /><path d="M12 .7h4.500L12.500 6H17" fill="none" stroke="#1b2618" strokeWidth="1.400" /></svg>
        </Tray>
      </Taskbar>
    </Screen>
  );
}
